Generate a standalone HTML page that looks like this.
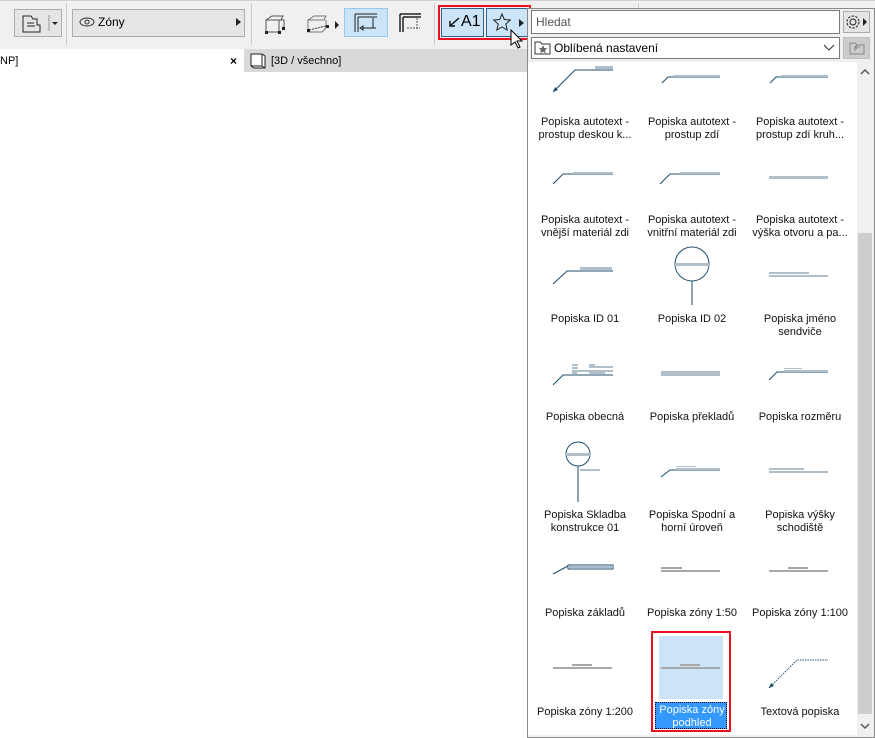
<!DOCTYPE html>
<html><head><meta charset="utf-8"><style>
*{margin:0;padding:0;box-sizing:border-box}
body{width:875px;height:738px;overflow:hidden;background:#fff;font-family:"Liberation Sans","DejaVu Sans",sans-serif;font-size:12px;color:#000;position:relative}
.a{position:absolute}
.lbl{position:absolute;width:108px;text-align:center;font-size:11px;line-height:13px;color:#111;margin-top:2px}
</style></head><body>
<div class="a" style="left:0;top:0;width:875px;height:49px;background:#f0f0f0;border-top:1px solid #d0d0d0"></div>
<div class="a" style="left:14px;top:9px;width:48px;height:28px;border:1px solid #adadad;background:#e5e5e5"></div>
<svg class="a" style="left:20px;top:13px" width="40" height="22"><path d="M3 3h8l2 3h4v6h3v7H3z" fill="none" stroke="#222"/><path d="M7 10h7M7 13h8" stroke="#222"/><path d="M29 2v16" stroke="#999"/><path d="M32 9h6l-3 3z" fill="#222"/></svg>
<div class="a" style="left:66px;top:3px;width:1px;height:42px;background:#ccc"></div>
<div class="a" style="left:72px;top:9px;width:173px;height:28px;border:1px solid #adadad;background:#e5e5e5"></div>
<svg class="a" style="left:79px;top:16px" width="18" height="12"><ellipse cx="8" cy="6" rx="7" ry="4" fill="none" stroke="#333"/><circle cx="8" cy="6" r="2" fill="none" stroke="#333"/></svg>
<div class="a" style="left:98px;top:15px;font-size:12px">Zóny</div>
<svg class="a" style="left:236px;top:18px" width="6" height="8"><path d="M0 0l5 4-5 4z" fill="#222"/></svg>
<div class="a" style="left:251px;top:3px;width:1px;height:42px;background:#ccc"></div>
<svg class="a" style="left:262px;top:12px" width="30" height="24"><path d="M4 8l6-4h11l-2 4H4v12h13V8M19 8h3v8" fill="none" stroke="#555"/><rect x="3" y="19" width="3" height="3" fill="#222"/><rect x="16" y="19" width="3" height="3" fill="#222"/><rect x="20" y="15" width="3" height="3" fill="#222"/></svg>
<svg class="a" style="left:304px;top:12px" width="40" height="24"><path d="M4 8l6-4h12l-2 4H4v12h14l4-4V8" fill="none" stroke="#777"/><path d="M5 18l17-4" stroke="#333" stroke-dasharray="2 1"/><rect x="3" y="17" width="3" height="3" fill="#222"/><rect x="22" y="13" width="3" height="3" fill="#222"/><path d="M31 9l4 4-4 4z" fill="#222"/></svg>
<div class="a" style="left:344px;top:8px;width:44px;height:29px;background:#cce4f7;border:1px solid #99c9ef"></div>
<svg class="a" style="left:352px;top:12px" width="30" height="22"><path d="M3 2h22M3 2v18M6 5h19M6 5v15" stroke="#222" fill="none"/><path d="M10 16h14M21 6v10M8 16l3-2v4z" stroke="#222" fill="none"/></svg>
<svg class="a" style="left:398px;top:12px" width="26" height="22"><path d="M2 2h21M2 2v18M5 5h18M5 5v15" stroke="#222" stroke-width="1.5" fill="none"/><path d="M9 16h13M19 6v12" stroke="#555" fill="none" stroke-dasharray="2 1"/></svg>
<div class="a" style="left:434px;top:3px;width:1px;height:42px;background:#ccc"></div>
<div class="a" style="left:441px;top:8px;width:43px;height:29px;background:#cce4f7;border:1px solid #2c628b"></div>
<div class="a" style="left:486px;top:8px;width:43px;height:29px;background:#cce4f7;border:1px solid #2c628b"></div>
<svg class="a" style="left:447px;top:15px" width="14" height="14"><path d="M12 3L3 11M3 6v5h5" stroke="#111" fill="none" stroke-width="1.5"/></svg>
<div class="a" style="left:461px;top:13px;font-size:16px">A1</div>
<svg class="a" style="left:492px;top:12px" width="20" height="20"><path d="M10 2l2.3 5.5 6 .5-4.5 4 1.4 6L10 15l-5.2 3 1.4-6L1.7 8l6-.5z" fill="none" stroke="#222"/></svg>
<svg class="a" style="left:519px;top:19px" width="6" height="8"><path d="M0 0l5 4-5 4z" fill="#222"/></svg>
<div class="a" style="left:438px;top:5px;width:93px;height:35px;border:2px solid #e81123"></div>
<svg class="a" style="left:510px;top:29px" width="14" height="20"><path d="M1 1v15l4-3 3 6 2-1-3-6h5z" fill="#fff" stroke="#000"/></svg>
<div class="a" style="left:638px;top:3px;width:1px;height:8px;background:#ccc"></div>
<div class="a" style="left:0;top:49px;width:244px;height:23px;background:#fff"></div>
<div class="a" style="left:0;top:55px;font-size:11px">NP]</div>
<div class="a" style="left:230px;top:54px;font-size:12px;font-weight:bold">×</div>
<div class="a" style="left:244px;top:49px;width:300px;height:23px;background:#d9d9d9"></div>
<svg class="a" style="left:249px;top:52px" width="20" height="17"><path d="M2 2h11l3 2v12H5l-3-2zM13 2v12H2M13 14l3 2" fill="#fff" stroke="#222"/></svg>
<div class="a" style="left:271px;top:55px;font-size:11px">[3D / všechno]</div>
<div class="a" style="left:527px;top:8px;width:348px;height:730px;background:#f0f0f0;border:1px solid #8a8a8a"></div>
<div class="a" style="left:531px;top:10px;width:309px;height:24px;background:#fff;border:1px solid #7a7a7a"></div>
<div class="a" style="left:536px;top:15px;font-size:12px;color:#555">Hledat</div>
<div class="a" style="left:843px;top:11px;width:27px;height:22px;border:1px solid #adadad;background:#e5e5e5"></div>
<svg class="a" style="left:845px;top:13px" width="24" height="18"><circle cx="8" cy="9" r="6" fill="none" stroke="#222" stroke-dasharray="2.5 1.3"/><circle cx="8" cy="9" r="3" fill="none" stroke="#222"/><path d="M18 5l4 4-4 4z" fill="#222"/></svg>
<div class="a" style="left:531px;top:37px;width:309px;height:22px;background:#fff;border:1px solid #7a7a7a"></div>
<svg class="a" style="left:534px;top:40px" width="18" height="16"><path d="M1 2h5l2 2h8v10H1z" fill="#fff" stroke="#333"/><path d="M9 5l1.3 3 3 .3-2.3 2 .8 3L9 11.7 6.2 13.3l.8-3-2.3-2 3-.3z" fill="#666"/></svg>
<div class="a" style="left:554px;top:41px;font-size:12px">Oblíbená nastavení</div>
<svg class="a" style="left:823px;top:44px" width="12" height="8"><path d="M1 1l5 5 5-5" stroke="#333" fill="none"/></svg>
<div class="a" style="left:843px;top:37px;width:27px;height:22px;border:1px solid #c0c0c0;background:#ccc"></div>
<svg class="a" style="left:849px;top:41px" width="16" height="14"><path d="M1 2h5l2 2h7v9H1z" fill="none" stroke="#888"/><path d="M6 10V6h5M8 8l-2-2 2-2" stroke="#888" fill="none"/></svg>
<div class="a" style="left:528px;top:62px;width:329px;height:673px;background:#fff"></div>
<div class="a" style="left:857px;top:62px;width:16px;height:673px;background:#f0f0f0"></div>
<div class="a" style="left:858px;top:233px;width:14px;height:481px;background:#cdcdcd"></div>
<svg class="a" style="left:859px;top:68px" width="12" height="8"><path d="M2 6l4-4 4 4" stroke="#555" stroke-width="1.5" fill="none"/></svg>
<svg class="a" style="left:859px;top:722px" width="12" height="8"><path d="M2 2l4 4 4-4" stroke="#555" stroke-width="1.5" fill="none"/></svg>
<div class="a" style="left:651px;top:631px;width:80px;height:101px;border:2px solid #e81123"></div>
<div class="a" style="left:659px;top:636px;width:64px;height:63px;background:#cce4f7"></div>
<div class="a" style="left:655px;top:702px;width:72px;height:27px;background:#3399ff;border:1px dotted #000"></div>
<svg class="a" style="left:528px;top:62px" width="329" height="673" viewBox="528 62 329 673">
<g fill="none" stroke="#1f4e6e" stroke-width="1">
<path d="M553 92L575 70H613"/><path d="M662 83L668 77H720"/><path d="M770 83L776 77H828"/>
<path d="M553 184L563 174H613"/><path d="M660 184L670 174H720"/>
<path d="M553 284L567 271H613"/><circle cx="692" cy="264" r="17"/><path d="M692 281V305"/>
<path d="M553 385L563 375H613"/><path d="M769 380L777 372H828"/>
<circle cx="578" cy="454" r="12"/><path d="M578 466V502"/><path d="M661 477L670 470H720"/>
<path d="M553 574L568 566"/><rect x="568" y="565" width="45" height="4"/>
<path d="M769 688L797 660H828" stroke-dasharray="1.5 1"/>
</g>
<g fill="#1f4e6e"><path d="M553 92l2-5 3 3z"/><path d="M769 688l2-5 3 3z"/></g>
<g fill="#b0bfc9">
<rect x="595" y="66" width="18" height="3"/><rect x="673" y="75" width="47" height="2"/><rect x="781" y="75" width="47" height="2"/>
<rect x="573" y="172" width="40" height="2"/><rect x="680" y="172" width="40" height="2"/><rect x="769" y="176" width="59" height="3"/>
<rect x="580" y="267" width="32" height="3"/><rect x="675" y="263" width="34" height="3"/><rect x="769" y="272" width="40" height="2"/><rect x="769" y="275" width="59" height="2"/>
<rect x="572" y="364" width="6" height="2"/><rect x="589" y="364" width="6" height="2"/><rect x="572" y="367" width="6" height="2"/><rect x="589" y="366" width="24" height="2"/><rect x="572" y="370" width="41" height="2"/><rect x="572" y="372" width="5" height="2"/><rect x="589" y="372" width="16" height="2"/>
<rect x="661" y="371" width="59" height="5"/><rect x="784" y="368" width="18" height="1"/><rect x="784" y="370" width="44" height="2"/>
<rect x="566" y="453" width="24" height="3"/><rect x="580" y="469" width="20" height="2"/><rect x="676" y="466" width="20" height="1"/><rect x="676" y="468" width="44" height="2"/><rect x="769" y="468" width="35" height="2"/><rect x="769" y="471" width="59" height="2"/>
</g>
<rect x="568" y="566" width="45" height="2" fill="#a9bccb"/>
<g fill="#a8a8a8">
<rect x="661" y="570" width="59" height="2"/><rect x="661" y="567" width="21" height="2"/><rect x="769" y="570" width="59" height="2"/><rect x="788" y="567" width="20" height="2"/>
<rect x="553" y="667" width="59" height="2"/><rect x="572" y="664" width="20" height="2"/><rect x="661" y="667" width="59" height="2"/><rect x="680" y="664" width="20" height="2"/>
</g>
</svg>
<div class="lbl" style="left:531px;top:114px">Popiska autotext -<br>prostup deskou k...</div>
<div class="lbl" style="left:638px;top:114px">Popiska autotext -<br>prostup zdí</div>
<div class="lbl" style="left:746px;top:114px">Popiska autotext -<br>prostup zdí kruh...</div>
<div class="lbl" style="left:531px;top:212px">Popiska autotext -<br>vnější materiál zdi</div>
<div class="lbl" style="left:638px;top:212px">Popiska autotext -<br>vnitřní materiál zdi</div>
<div class="lbl" style="left:746px;top:212px">Popiska autotext -<br>výška otvoru a pa...</div>
<div class="lbl" style="left:531px;top:311px">Popiska ID 01</div>
<div class="lbl" style="left:638px;top:311px">Popiska ID 02</div>
<div class="lbl" style="left:746px;top:311px">Popiska jméno<br>sendviče</div>
<div class="lbl" style="left:531px;top:409px">Popiska obecná</div>
<div class="lbl" style="left:638px;top:409px">Popiska překladů</div>
<div class="lbl" style="left:746px;top:409px">Popiska rozměru</div>
<div class="lbl" style="left:531px;top:507px">Popiska Skladba<br>konstrukce 01</div>
<div class="lbl" style="left:638px;top:507px">Popiska Spodní a<br>horní úroveň</div>
<div class="lbl" style="left:746px;top:507px">Popiska výšky<br>schodiště</div>
<div class="lbl" style="left:531px;top:605px">Popiska základů</div>
<div class="lbl" style="left:638px;top:605px">Popiska zóny 1:50</div>
<div class="lbl" style="left:746px;top:605px">Popiska zóny 1:100</div>
<div class="lbl" style="left:531px;top:704px">Popiska zóny 1:200</div>
<div class="lbl" style="left:638px;top:702px;color:#fff">Popiska zóny<br>podhled</div>
<div class="lbl" style="left:746px;top:704px">Textová popiska</div>
</body></html>
